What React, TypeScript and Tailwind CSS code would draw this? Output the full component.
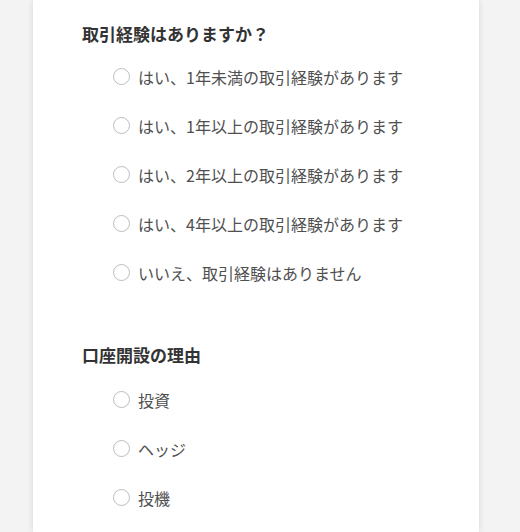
import React from "react";

const font = { fontFamily: '"Noto Sans CJK JP", "Noto Sans", sans-serif' };

function Radio({ label }: { label: string }) {
  return (
    <label className="flex items-center h-[49px] pl-[80px]">
      <span className="w-[17px] h-[17px] rounded-full border border-[#bdbdbd] bg-white shrink-0" />
      <span className="ml-[8px] text-[16px] leading-none text-[#505050]">{label}</span>
    </label>
  );
}

export default function App() {
  const q1 = [
    "はい、1年未満の取引経験があります",
    "はい、1年以上の取引経験があります",
    "はい、2年以上の取引経験があります",
    "はい、4年以上の取引経験があります",
    "いいえ、取引経験はありません",
  ];
  const q2 = ["投資", "ヘッジ", "投機"];
  return (
    <div className="min-h-[532px] h-[532px] overflow-hidden bg-[#f3f3f3]" style={font}>
      <div className="ml-[33px] w-[446px] h-full bg-white shadow-[0_0_6px_rgba(0,0,0,0.12)]">
        <div className="pt-[22px]">
          <h2 className="pl-[49px] text-[17px] font-bold leading-[24px] text-[#333333]">取引経験はありますか？</h2>
          <div className="mt-[6px]">
            {q1.map((t) => (
              <Radio key={t} label={t} />
            ))}
          </div>
          <h2 className="mt-[46px] pl-[49px] text-[17px] font-bold leading-[24px] text-[#333333]">口座開設の理由</h2>
          <div className="mt-[8px]">
            {q2.map((t) => (
              <Radio key={t} label={t} />
            ))}
          </div>
        </div>
      </div>
    </div>
  );
}
